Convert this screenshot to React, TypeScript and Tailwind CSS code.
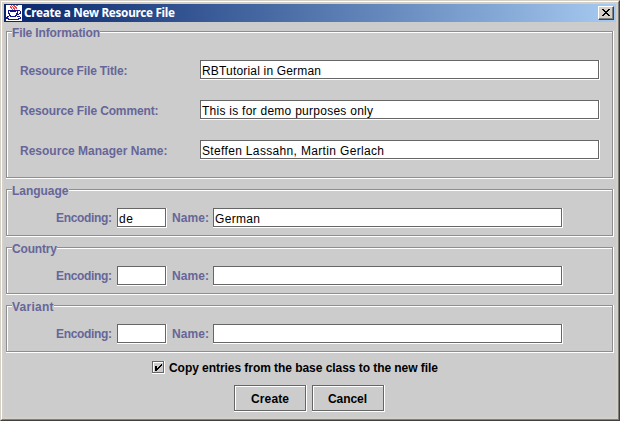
import React from "react";

function Caption({ text, width, size = 12, baseline = 12 }: { text: string; width: number; size?: number; baseline?: number }) {
  return (
    <svg width={width} height="16" className="block shrink-0 overflow-visible" fill="currentColor">
      <text x="0" y={baseline} fontSize={size} textLength={width} lengthAdjust="spacing">{text}</text>
    </svg>
  );
}

function Field({ className, value, width = 0 }: { className: string; value?: string; width?: number }) {
  return (
    <div className={`h-5 shrink-0 border-r border-b border-white ${className}`}>
      <div className="flex h-full w-full items-end border border-[#666] bg-white pl-px font-normal text-black">
        {value && <Caption text={value} width={width} baseline={13} />}
      </div>
    </div>
  );
}

function Group({ title, width, className, children }: { title: string; width: number; className: string; children: React.ReactNode }) {
  return (
    <section className={`relative border-r border-b border-white ${className}`}>
      <div className="h-full border border-[#8e8e8e]">
        <div className="h-full border-t border-l border-white">{children}</div>
      </div>
      <div className="absolute -top-[6px] left-[6px] bg-[#ccc]">
        <Caption text={title} width={width} />
      </div>
    </section>
  );
}

function Row({ label, width, value, valueWidth }: { label: string; width: number; value: string; valueWidth: number }) {
  return (
    <div className="flex h-5 items-center">
      <div className="w-[181px] pt-px pl-[0.5px]"><Caption text={label} width={width} /></div>
      <Field className="w-[400px]" value={value} width={valueWidth} />
    </div>
  );
}

function Locale({ code, name, nameWidth }: { code?: string; name?: string; nameWidth?: number }) {
  return (
    <div className="flex items-center pt-[17px] pl-12">
      <div className="w-[61px]"><Caption text="Encoding:" width={56} /></div>
      <Field className="w-[50px]" value={code} width={14} />
      <div className="w-[46px] pl-[5px]"><Caption text="Name:" width={37} /></div>
      <Field className="w-[350px]" value={name} width={nameWidth} />
    </div>
  );
}

function Button({ text, width }: { text: string; width: number }) {
  return (
    <button className="h-[27px] w-[73px] border-r border-b border-white">
      <span className="flex h-full w-full items-center justify-center border border-[#666] pt-px pr-px shadow-[inset_1px_1px_0_#fff]">
        <Caption text={text} width={width} />
      </span>
    </button>
  );
}

const cup = [
  ".....r.rr.rr....",
  "....r.r.rr......",
  "....rr.r.rr.....",
  ".....r.rr.r.....",
  "......r.r.......",
  "..bbbbbbbbbbbb..",
  "..b.bbbbbb.b..b.",
  "..b........b..b.",
  "..bb......bb.bb.",
  "...b......bbb...",
  "...bb....bb.....",
  ".bb.bbbbbb.bbb..",
  "bb............b.",
  "bbb.........bbb.",
  "..bbbbbbbbbbb...",
  "................",
];

function JavaIcon() {
  return (
    <svg width="16" height="16" className="shrink-0 bg-white" shapeRendering="crispEdges">
      {cup.flatMap((row, y) => [...row].map((c, x) => c === "." ? null : (
        <rect key={`${x}-${y}`} x={x} y={y} width="1" height="1" fill={c === "r" ? "#f04040" : "#101090"} />
      )))}
    </svg>
  );
}

export default function App() {
  return (
    <div className="h-[421px] w-[620px] border border-t-[#d4d0c8] border-r-[#404040] border-b-[#404040] border-l-[#d4d0c8] bg-[#ccc] font-['Liberation_Sans',Arial,sans-serif] text-[12px] font-bold text-[#666699]">
      <div className="h-full border border-t-white border-r-[#808080] border-b-[#808080] border-l-white">
        <div className="flex h-full flex-col border-2 border-[#d4d0c8]">
          <header className="flex h-[18px] shrink-0 items-center bg-linear-to-r from-[#0a246a] to-[#a6caf0] pr-[2px] pl-[2px] text-white">
            <JavaIcon />
            <div className="ml-[2px] grow font-['Noto_Sans',sans-serif]"><Caption text="Create a New Resource File" width={151} size={11.7} /></div>
            <button className="h-[14px] w-4 border border-t-white border-r-[#404040] border-b-[#404040] border-l-white bg-[#d4d0c8] shadow-[inset_-1px_-1px_0_#808080]">
              <svg width="14" height="12" className="block" shapeRendering="crispEdges" fill="#000">
                <path d="M3 2h2v1h1v1h2V3h1V2h2v1h-1v1H9v1H8v1h1v1h1v1h1v1H9V8H8V7H6v1H5v1H3V8h1V7h1V6h1V5H5V4H4V3H3z" />
              </svg>
            </button>
          </header>
          <main className="flex grow flex-col pt-[9px] pr-[2px] pl-[2px]">
            <Group title="File Information" width={88} className="h-[148px]">
              <div className="flex flex-col gap-5 pt-[27px] pl-[11px]">
                <Row label="Resource File Title:" width={107.5} value="RBTutorial in German" valueWidth={119} />
                <Row label="Resource File Comment:" width={138.5} value="This is for demo purposes only" valueWidth={171} />
                <Row label="Resource Manager Name:" width={147.5} value="Steffen Lassahn, Martin Gerlach" valueWidth={182} />
              </div>
            </Group>
            <Group title="Language" width={56.5} className="mt-[10px] h-12"><Locale code="de" name="German" nameWidth={45} /></Group>
            <Group title="Country" width={45} className="mt-[10px] h-12"><Locale /></Group>
            <Group title="Variant" width={41.5} className="mt-[10px] h-12"><Locale /></Group>
            <div className="mt-[6px] flex h-[18px] items-start pl-[146px] text-black">
              <div className="mt-[2px] h-[13px] w-[13px] border-r border-b border-white">
                <div className="h-full w-full border border-[#666] shadow-[inset_1px_1px_0_#fff]">
                  <svg width="10" height="10" className="block" shapeRendering="crispEdges" fill="#000"><path d="M2 4h2v2h1V5h1V4h1V3h1V2h1v2H8v1H7v1H6v1H5v1H4v1H2z" /></svg>
                </div>
              </div>
              <div className="mt-px ml-[3.5px]"><Caption text="Copy entries from the base class to the new file" width={269} /></div>
            </div>
            <div className="mt-2 flex gap-[5px] pl-[228px] text-black">
              <Button text="Create" width={38} />
              <Button text="Cancel" width={39} />
            </div>
          </main>
        </div>
      </div>
    </div>
  );
}
